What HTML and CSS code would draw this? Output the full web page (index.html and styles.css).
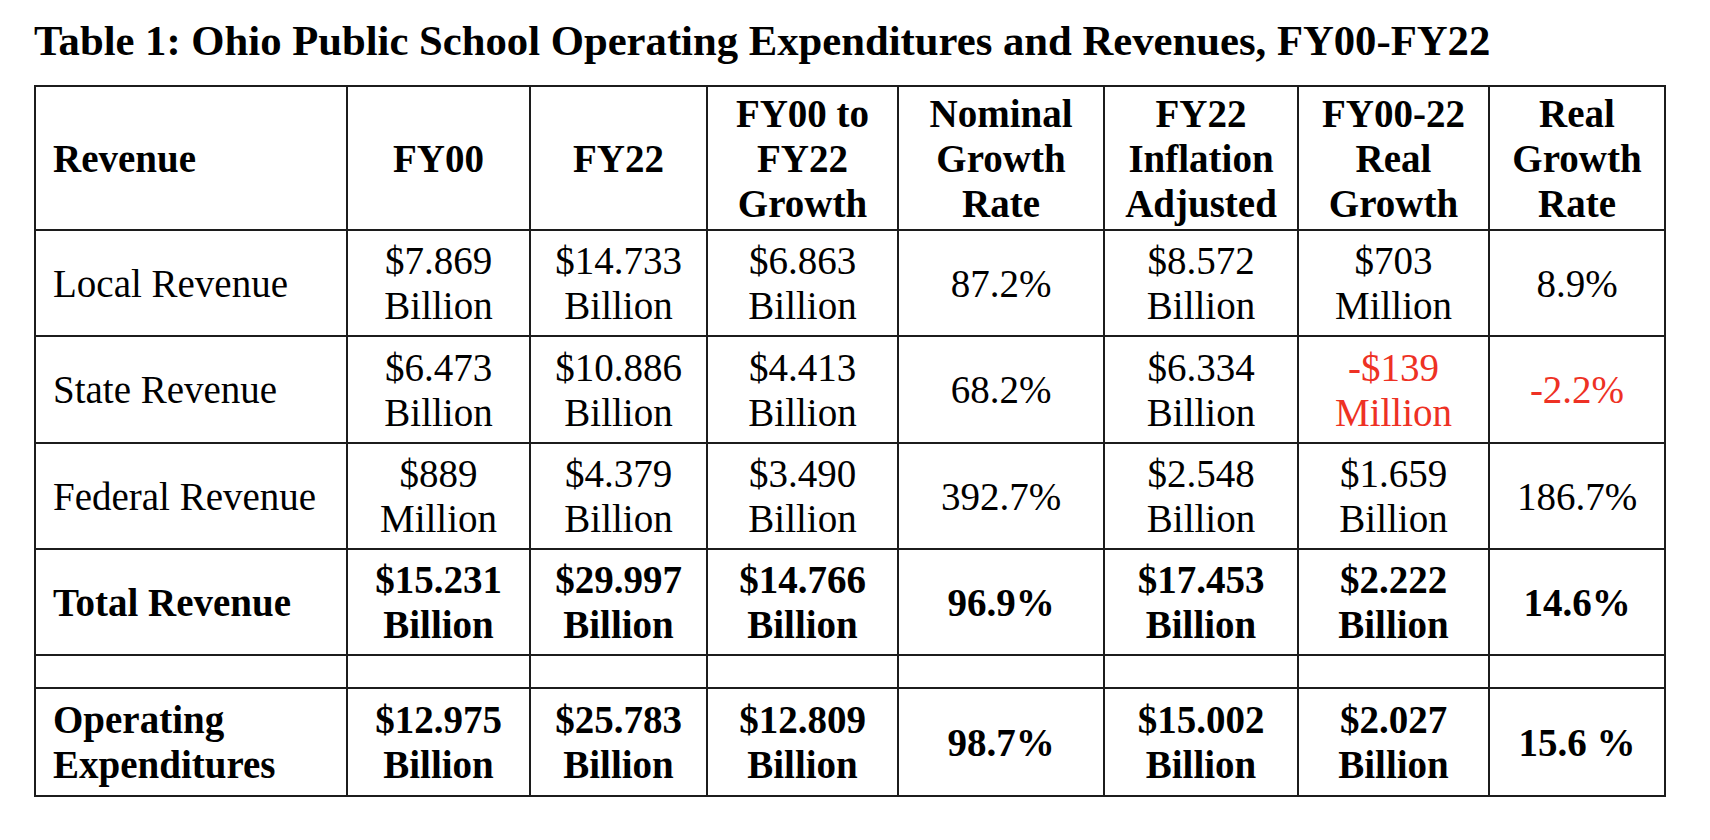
FILE: index.html
```html
<!DOCTYPE html>
<html>
  <head>
    <meta charset="UTF-8" />
    <title>Ohio Public School Operating Expenditures and Revenues</title>
    <link rel="stylesheet" href="styles.css">
  </head>
  <body>
    <div class="report">
      <h1 class="report-title">Table 1: Ohio Public School Operating Expenditures and Revenues, FY00-FY22</h1>

      <table class="data-table">
        <colgroup>
          <col class="col-label" />
          <col class="col-fy00" />
          <col class="col-fy22" />
          <col class="col-growth" />
          <col class="col-nominal" />
          <col class="col-adjusted" />
          <col class="col-real" />
          <col class="col-rate" />
        </colgroup>
        <thead>
          <tr class="head-row">
            <th class="label">Revenue</th>
            <th>FY00</th>
            <th>FY22</th>
            <th>FY00 to<br />FY22<br />Growth</th>
            <th>Nominal<br />Growth<br />Rate</th>
            <th>FY22<br />Inflation<br />Adjusted</th>
            <th>FY00-22<br />Real<br />Growth</th>
            <th>Real<br />Growth<br />Rate</th>
          </tr>
        </thead>
        <tbody>
          <tr class="row-a">
            <td class="label">Local Revenue</td>
            <td>$7.869<br />Billion</td>
            <td>$14.733<br />Billion</td>
            <td>$6.863<br />Billion</td>
            <td>87.2%</td>
            <td>$8.572<br />Billion</td>
            <td>$703<br />Million</td>
            <td>8.9%</td>
          </tr>
          <tr class="row-b">
            <td class="label">State Revenue</td>
            <td>$6.473<br />Billion</td>
            <td>$10.886<br />Billion</td>
            <td>$4.413<br />Billion</td>
            <td>68.2%</td>
            <td>$6.334<br />Billion</td>
            <td class="negative">-$139<br />Million</td>
            <td class="negative">-2.2%</td>
          </tr>
          <tr class="row-a">
            <td class="label">Federal Revenue</td>
            <td>$889<br />Million</td>
            <td>$4.379<br />Billion</td>
            <td>$3.490<br />Billion</td>
            <td>392.7%</td>
            <td>$2.548<br />Billion</td>
            <td>$1.659<br />Billion</td>
            <td>186.7%</td>
          </tr>
          <tr class="row-a total">
            <td class="label">Total Revenue</td>
            <td>$15.231<br />Billion</td>
            <td>$29.997<br />Billion</td>
            <td>$14.766<br />Billion</td>
            <td>96.9%</td>
            <td>$17.453<br />Billion</td>
            <td>$2.222<br />Billion</td>
            <td>14.6%</td>
          </tr>
          <tr class="spacer">
            <td></td><td></td><td></td><td></td><td></td><td></td><td></td><td></td>
          </tr>
          <tr class="row-c total">
            <td class="label">Operating<br />Expenditures</td>
            <td>$12.975<br />Billion</td>
            <td>$25.783<br />Billion</td>
            <td>$12.809<br />Billion</td>
            <td>98.7%</td>
            <td>$15.002<br />Billion</td>
            <td>$2.027<br />Billion</td>
            <td>15.6 %</td>
          </tr>
        </tbody>
      </table>
    </div>
  </body>
</html>
```

FILE: styles.css
```css
body {
  margin: 0;
  background-color: #fff;
  color: #000;
  font-family: "Liberation Serif", "Times New Roman", serif;
}

.report {
  padding: 17px 0 0 34px;
}

.report-title {
  margin: 0 0 20px 0;
  font-size: 42.7px;
  line-height: 48px;
  font-weight: bold;
}

.data-table {
  border-collapse: collapse;
  table-layout: fixed;
  width: 1630px;
  font-size: 39px;
  line-height: 45px;
}

.col-label { width: 312px; }
.col-fy00 { width: 183px; }
.col-fy22 { width: 177px; }
.col-growth { width: 191px; }
.col-nominal { width: 206px; }
.col-adjusted { width: 194px; }
.col-real { width: 191px; }
.col-rate { width: 176px; }

.data-table th,
.data-table td {
  border: 2px solid #1c1c1c;
  padding: 0;
  text-align: center;
  vertical-align: middle;
}

.data-table th {
  font-weight: bold;
}

.data-table .label {
  text-align: left;
  padding-left: 17px;
}

.head-row {
  height: 144px;
}

.row-a {
  height: 106px;
}

.row-b {
  height: 107px;
}

.row-c {
  height: 108px;
}

.spacer {
  height: 33px;
}

.total td {
  font-weight: bold;
}

.negative {
  color: #ee3124;
}
```
